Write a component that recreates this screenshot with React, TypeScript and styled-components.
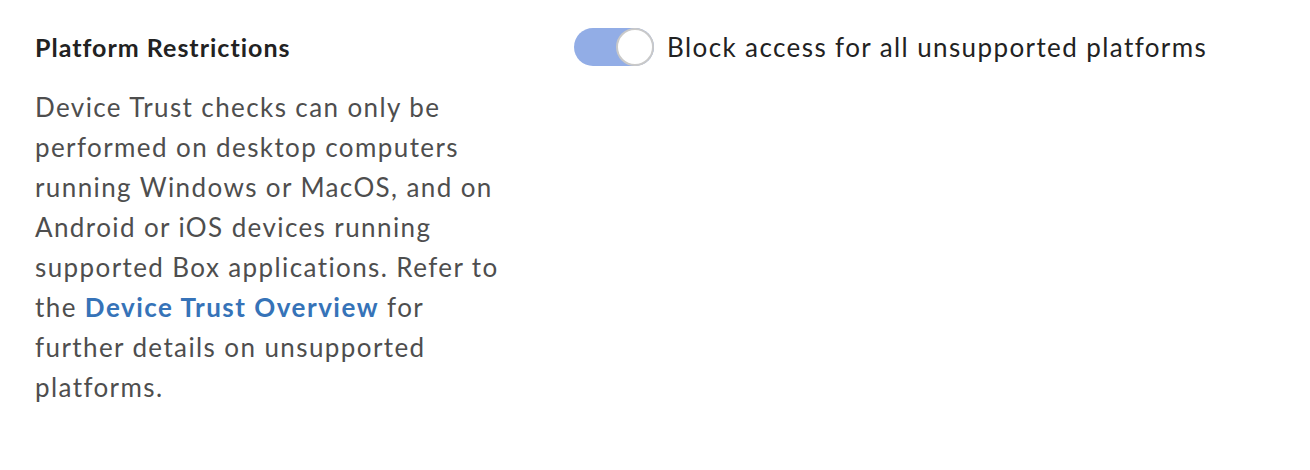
import React, { useState } from "react";
import styled, { createGlobalStyle } from "styled-components";

const GlobalStyle = createGlobalStyle`
  body {
    margin: 0;
    background: #fff;
    font-family: Lato, "Open Sans", sans-serif;
  }
`;

export default function App() {
  const [blocked, setBlocked] = useState(true);
  return (
    <>
      <GlobalStyle />
      <Section>
        <Info>
          <Title>Platform Restrictions</Title>
          <Description>
            Device Trust checks can only be performed on desktop computers
            running Windows or MacOS, and on Android or iOS devices running
            supported Box applications. Refer to the{" "}
            <Link href="#">Device Trust Overview</Link> for further details on
            unsupported platforms.
          </Description>
        </Info>
        <Setting>
          <ToggleLabel>
            <Track $on={blocked} onClick={() => setBlocked((prev) => !prev)}>
              <Knob $on={blocked} />
            </Track>
            <LabelText>Block access for all unsupported platforms</LabelText>
          </ToggleLabel>
        </Setting>
      </Section>
    </>
  );
}

const Section = styled.div`
  display: flex;
  flex-direction: row;
  align-items: flex-start;
  padding: 28px 35px;
`;

const Info = styled.div`
  width: 470px;
  margin-right: 69px;
  flex-shrink: 0;
`;

const Title = styled.h3`
  margin: 0;
  font-size: 25px;
  font-weight: 700;
  line-height: 38px;
  letter-spacing: 1px;
  color: #222;
`;

const Description = styled.p`
  margin: 21px 0 0;
  font-size: 26px;
  line-height: 40px;
  letter-spacing: 1.4px;
  color: #4e4e4e;
`;

const Link = styled.a`
  color: #3673b8;
  font-weight: 700;
  letter-spacing: 1.5px;
  text-decoration: none;
`;

const Setting = styled.div`
  display: flex;
  flex-direction: column;
`;

const ToggleLabel = styled.label`
  display: flex;
  align-items: center;
  gap: 13px;
  cursor: pointer;
`;

const Track = styled.span<{ $on: boolean }>`
  position: relative;
  width: 80px;
  height: 38px;
  border-radius: 19px;
  background: ${(p) => (p.$on ? "#92ade6" : "#d3d3d3")};
  flex-shrink: 0;
`;

const Knob = styled.span<{ $on: boolean }>`
  position: absolute;
  top: 0;
  left: ${(p) => (p.$on ? "42px" : "0")};
  width: 38px;
  height: 38px;
  box-sizing: border-box;
  border-radius: 50%;
  background: #fff;
  border: 2px solid #c9c9c9;
`;

const LabelText = styled.span`
  font-size: 26px;
  line-height: 38px;
  letter-spacing: 1.4px;
  color: #222;
`;
